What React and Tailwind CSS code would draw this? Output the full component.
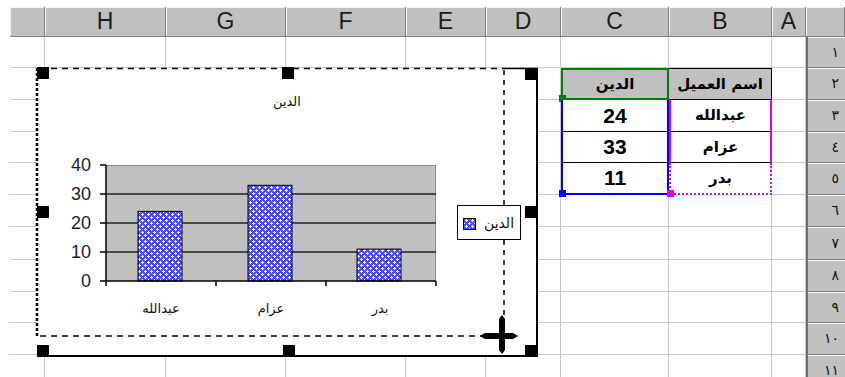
import React from "react";

const letters = ["", "", "H", "G", "F", "E", "D", "C", "B", "A", ""];
const rowLabels = ["١", "٢", "٣", "٤", "٥", "٦", "٧", "٨", "٩", "١٠", "١١"];
const data = [
  { name: "عبدالله", debt: 24 },
  { name: "عزام", debt: 33 },
  { name: "بدر", debt: 11 },
];

// font stacks
const latin = "font-['Liberation_Sans',Arial,sans-serif]";
const arabic = "font-['DejaVu_Sans','Liberation_Sans',sans-serif]";

function HeaderCell({ i }) {
  if (i === 0) return <div className="bg-white" />;
  return (
    <div
      className={`flex items-center justify-center bg-[#c0c0c0] border-r border-b border-[#808080] shadow-[inset_1px_1px_0_#f4f4f4] text-[23px] leading-none text-[#1c1c1c] ${latin}`}
    >
      {letters[i]}
    </div>
  );
}

function BodyCell({ r, c }) {
  if (c === 0) return <div className="bg-white" />;
  if (c === 10) {
    return (
      <div
        className={`flex items-center justify-end pr-[6px] bg-[#c0c0c0] border-l-2 border-l-[#6e6e6e] border-b border-b-[#808080] shadow-[inset_0_1px_0_#f4f4f4] text-[14px] text-[#111] ${arabic}`}
      >
        {rowLabels[r - 1]}
      </div>
    );
  }
  // the table C2:B5
  if (r === 2 && c === 7) {
    return (
      <div
        className={`relative flex items-center justify-center bg-[#c0c0c0] border-2 border-[#008000] text-[15px] font-bold text-black ${arabic}`}
      >
        الدين
        <span className="absolute -left-[4px] -bottom-[4px] w-[7px] h-[7px] bg-[#008000]" />
      </div>
    );
  }
  if (r === 2 && c === 8) {
    return (
      <div
        className={`flex items-center justify-center bg-[#c0c0c0] border-y border-r border-black text-[15px] font-bold text-black ${arabic}`}
      >
        اسم العميل
      </div>
    );
  }
  if (r >= 3 && r <= 5 && c === 7) {
    const last = r === 5;
    return (
      <div
        className={`relative flex items-center justify-center bg-white border-x-2 border-x-[#0000ff] text-[21px] font-bold text-black ${latin} ${
          last ? "border-b-2 border-b-[#0000ff]" : "border-b border-b-black"
        }`}
      >
        {data[r - 3].debt}
        {last && (
          <span className="absolute -left-[4px] -bottom-[4px] w-[7px] h-[7px] bg-[#0000ff]" />
        )}
      </div>
    );
  }
  if (r >= 3 && r <= 5 && c === 8) {
    const last = r === 5;
    return (
      <div
        className={`relative flex items-center justify-center bg-white border-x-2 border-x-[#e000e0] border-dotted text-[15px] font-bold text-black ${arabic} ${
          last ? "border-b-2 border-b-[#e000e0]" : "border-b border-b-black border-solid"
        }`}
      >
        {data[r - 3].name}
        {last && (
          <span className="absolute -left-[4px] -bottom-[4px] w-[7px] h-[7px] bg-[#e000e0]" />
        )}
      </div>
    );
  }
  return <div className="bg-white border-r border-b border-[#c8c8c8]" />;
}

function Chart() {
  const plot = { x: 106, y: 165, w: 330, h: 116 };
  const scale = plot.h / 40;
  const ticks = [40, 30, 20, 10, 0];
  const cats = [160, 270, 379];

  return (
    <svg
      className="absolute left-0 top-0 pointer-events-none"
      width="845"
      height="377"
      viewBox="0 0 845 377"
    >
      <defs>
        <pattern id="dots" width="6" height="6" patternUnits="userSpaceOnUse">
          <rect width="6" height="6" fill="#4a4aff" />
          <rect x="1" y="0" width="1" height="3" fill="#fff" />
          <rect x="0" y="1" width="3" height="1" fill="#fff" />
          <rect x="4" y="3" width="1" height="3" fill="#fff" />
          <rect x="3" y="4" width="3" height="1" fill="#fff" />
        </pattern>
      </defs>

      {/* chart object */}
      <rect x="37" y="68" width="500" height="288" fill="#fff" />
      <line x1="504" y1="68.5" x2="537" y2="68.5" stroke="#000" strokeWidth="1.5" />
      <line x1="537" y1="68" x2="537" y2="357" stroke="#000" strokeWidth="2" />
      <line x1="37" y1="356" x2="538" y2="356" stroke="#000" strokeWidth="2" />

      {/* drag outline */}
      <line x1="40" y1="68.5" x2="504" y2="68.5" stroke="#000" strokeWidth="1.5" strokeDasharray="6 5" />
      <line x1="504" y1="70" x2="504" y2="318" stroke="#000" strokeWidth="1.5" strokeDasharray="5 5" />
      <line x1="40" y1="336" x2="481" y2="336" stroke="#000" strokeWidth="1.5" strokeDasharray="6 5" />
      <line x1="37" y1="68" x2="37" y2="338" stroke="#000" strokeWidth="2.5" strokeDasharray="3 2" />

      {/* title */}
      <text x="287" y="106" textAnchor="middle" fontSize="13" fill="#111" className={arabic}>
        الدين
      </text>

      {/* plot area */}
      <rect x={plot.x} y={plot.y} width={plot.w} height={plot.h} fill="#c0c0c0" />
      <line x1={plot.x} y1={plot.y + 0.5} x2={plot.x + plot.w} y2={plot.y + 0.5} stroke="#8a8a8a" />
      <line x1={plot.x + plot.w - 0.5} y1={plot.y} x2={plot.x + plot.w - 0.5} y2={plot.y + plot.h} stroke="#8a8a8a" />
      {ticks.map((t) => {
        const y = plot.y + plot.h - t * scale;
        return (
          <g key={t}>
            {t !== 0 && t !== 40 && (
              <line x1={plot.x} y1={y} x2={plot.x + plot.w} y2={y} stroke="#222" strokeWidth="1.5" />
            )}
            <line x1={plot.x - 6} y1={y} x2={plot.x} y2={y} stroke="#000" strokeWidth="1.5" />
            <text x="91" y={y + 6} textAnchor="end" fontSize="18" fill="#222" className={latin}>
              {t}
            </text>
          </g>
        );
      })}
      {data.map((d, i) => {
        const h = d.debt * scale;
        return (
          <rect
            key={d.name}
            x={cats[i] - 22}
            y={plot.y + plot.h - h}
            width="44"
            height={h}
            fill="url(#dots)"
            stroke="#000"
            strokeWidth="1"
          />
        );
      })}
      <line x1={plot.x} y1={plot.y} x2={plot.x} y2={plot.y + plot.h + 1} stroke="#000" strokeWidth="1.5" />
      <line x1={plot.x} y1={plot.y + plot.h} x2={plot.x + plot.w} y2={plot.y + plot.h} stroke="#000" strokeWidth="1.5" />
      {[106, 216, 326, 436].map((x) => (
        <line key={x} x1={x} y1={plot.y + plot.h} x2={x} y2={plot.y + plot.h + 5} stroke="#000" strokeWidth="1.5" />
      ))}
      {data.map((d, i) => (
        <text key={d.name} x={cats[i] + 1} y="313" textAnchor="middle" fontSize="13" fill="#111" className={arabic}>
          {d.name}
        </text>
      ))}

      {/* legend */}
      <rect x="457.5" y="205.5" width="63" height="34" fill="#fff" stroke="#000" />
      <rect x="463.5" y="218.5" width="12" height="11" fill="url(#dots)" stroke="#000" />
      <text x="499" y="228" textAnchor="middle" fontSize="14" fill="#111" className={arabic}>
        الدين
      </text>

      {/* handles */}
      {[
        [37, 67],
        [282, 67],
        [525, 68],
        [37, 206],
        [525, 206],
        [37, 345],
        [283, 345],
        [525, 345],
      ].map(([x, y]) => (
        <rect key={`${x}-${y}`} x={x} y={y} width="12" height="12" fill="#000" />
      ))}

      {/* move cursor */}
      <path d="M502 315 L505 319 L505 333 L513 333 L518 336 L513 339 L505 339 L505 350 L502 354 L499 350 L499 339 L485 339 L480 336 L485 333 L499 333 L499 319 Z" fill="#000" />
    </svg>
  );
}

export default function App() {
  const rows = Array.from({ length: 11 }, (_, i) => i + 1);
  return (
    <div className="relative w-[845px] h-[377px] overflow-hidden bg-white">
      <div className="grid grid-cols-[10px_35px_121px_120px_120px_80px_75px_108px_103px_34px_39px] grid-rows-[7px_30px_31px_32px_32px_31px_32px_32px_33px_32px_31px_32px_32px]">
        {letters.map((_, i) => (
          <div key={`top-${i}`} className="bg-white" />
        ))}
        {letters.map((_, i) => (
          <HeaderCell key={`h-${i}`} i={i} />
        ))}
        {rows.map((r) =>
          letters.map((_, c) => <BodyCell key={`${r}-${c}`} r={r} c={c} />)
        )}
      </div>
      <Chart />
    </div>
  );
}
